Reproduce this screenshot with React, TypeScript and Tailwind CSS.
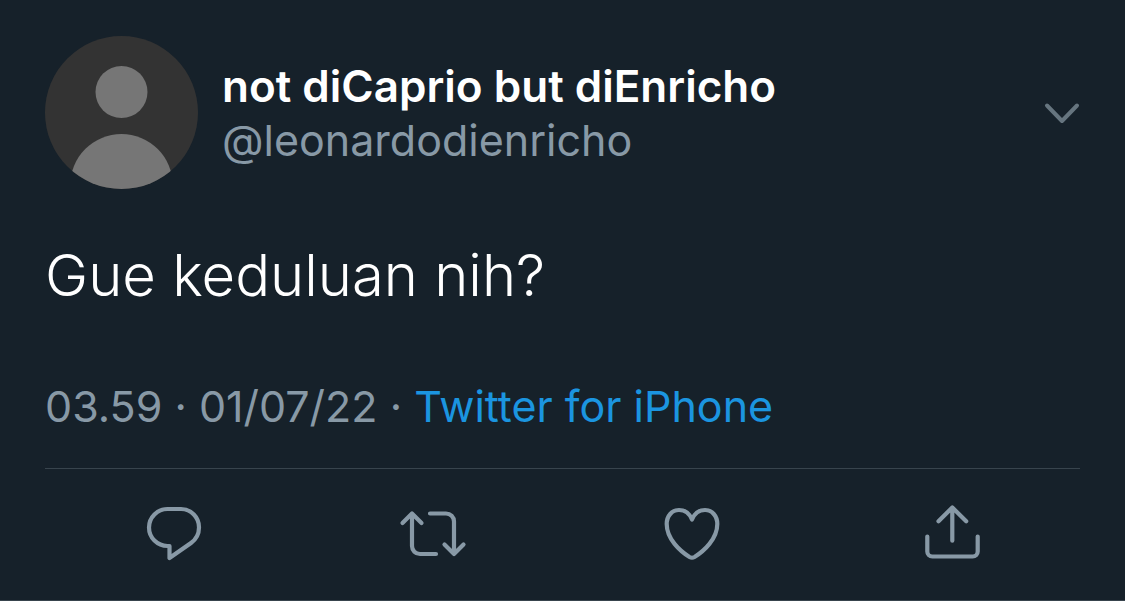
import type { ReactNode } from "react";

const TWEET = {
  name: "not diCaprio but diEnricho",
  handle: "@leonardodienricho",
  text: "Gue keduluan nih?",
  time: "03.59",
  date: "01/07/22",
  source: "Twitter for iPhone",
};

function Avatar() {
  return (
    <svg viewBox="0 0 153 153" className="size-[153px] shrink-0" role="img" aria-label="Profile picture">
      <defs>
        <clipPath id="avatar-clip">
          <circle cx="76.5" cy="76.5" r="76.5" />
        </clipPath>
      </defs>
      <g clipPath="url(#avatar-clip)">
        <rect width="153" height="153" fill="#333333" />
        <circle cx="76.5" cy="56" r="26" fill="#767676" />
        <circle cx="76.5" cy="149.3" r="51.3" fill="#767676" />
      </g>
    </svg>
  );
}

function ActionButton({ label, children }: { label: string; children: ReactNode }) {
  return (
    <button type="button" aria-label={label} className="flex justify-center text-[#8899a6]">
      <svg
        viewBox="0 0 72 64"
        className="h-16 w-[72px]"
        fill="none"
        stroke="currentColor"
        strokeWidth="4.2"
        strokeLinecap="round"
        strokeLinejoin="round"
      >
        {children}
      </svg>
    </button>
  );
}

export default function App() {
  return (
    <article className="flex min-h-screen w-full flex-col border-b border-[#38444d] bg-[#16212a] px-[45px] pt-9 font-['Inter','Liberation_Sans',sans-serif]">
      <header className="flex items-center gap-6">
        <Avatar />
        <div className="min-w-0 flex-1 leading-[54px] whitespace-nowrap">
          <h1 className="text-[44px] font-semibold text-white">{TWEET.name}</h1>
          <p className="text-[43px] text-[#8899a6]">{TWEET.handle}</p>
        </div>
        <button type="button" aria-label="More" className="shrink-0 text-[#66757f]">
          <svg
            viewBox="0 0 36 24"
            className="h-6 w-9"
            fill="none"
            stroke="currentColor"
            strokeWidth="4"
            strokeLinecap="round"
            strokeLinejoin="round"
          >
            <path d="M3 4.500l15 15.500L33 4.500" />
          </svg>
        </button>
      </header>

      <p className="mt-[50px] text-[58px] leading-[72px] font-light text-white">{TWEET.text}</p>

      <p className="mt-[68px] text-[43px] leading-[54px] whitespace-nowrap text-[#8899a6]">
        {TWEET.time} · {TWEET.date} ·{" "}
        <a href="#source" className="text-[#1b95e0]">
          {TWEET.source}
        </a>
      </p>

      <footer className="mt-[35px] grid grid-cols-4 border-t border-[#38444d] pt-8">
        <ActionButton label="Reply">
          <path d="M31.500 45H29.500a18.500 18.500 0 0 1 0-37H43a18.200 18.200 0 0 1 18 18.500c0 6.500-2.500 11.500-8 15.500L31.500 57V45z" />
        </ActionButton>
        <ActionButton label="Retweet">
          <path d="M5.500 22l9.500-9.500 9.500 9.500M15 12.500V45a8 8 0 0 0 8 8h16" />
          <path d="M33 12.500h16a8 8 0 0 1 8 8V53M47.500 43.500L57 53l9.500-9.500" />
        </ActionButton>
        <ActionButton label="Like">
          <path d="M36 18.500C33.500 12.500 29 9 23 9c-7 0-12.300 6-12.300 14 0 15 13.300 27 22.800 33q2.500 1.500 5 0c9.500-6 22.800-18 22.800-33C61.300 15 56 9 49 9c-6 0-10.500 3.500-13 9.500z" />
        </ActionButton>
        <ActionButton label="Share">
          <path d="M23.500 20.300L37.300 6.500l13.900 13.800M37.300 6.500v33.200" />
          <path d="M12.300 35.500V50.500a5 5 0 0 0 5 5h40.400a5 5 0 0 0 5-5V35.500" />
        </ActionButton>
      </footer>
    </article>
  );
}
